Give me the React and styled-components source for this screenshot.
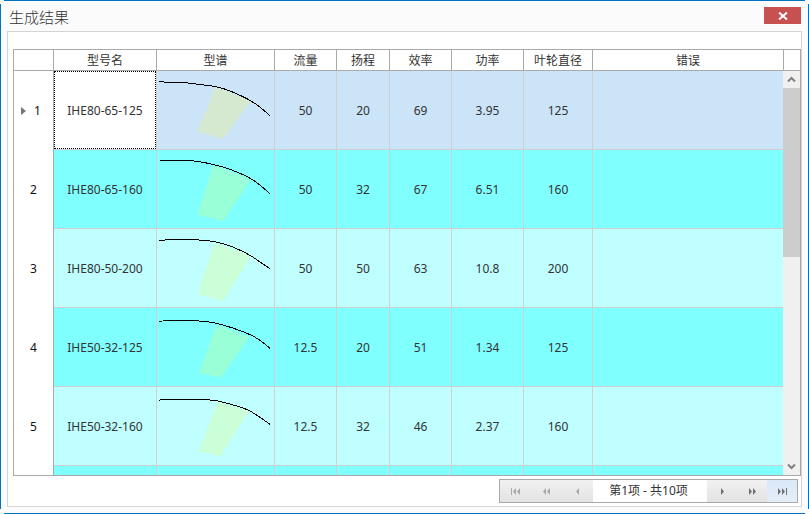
import React from 'react'
import styled, { createGlobalStyle } from 'styled-components'

const GlobalStyle = createGlobalStyle`
  html, body {
    margin: 0;
    padding: 0;
    background: #fff;
  }
  body {
    font-family: "Noto Sans", "Noto Sans CJK SC", sans-serif;
    font-size: 12px;
    color: #333;
  }
`

const COLS = '40px 103px 118px 62px 53px 62px 72px 69px'
const BLUE = 'linear-gradient(#0072c6, #0072c6)'

// the frame lines stop short of the corners, so they are drawn as backgrounds
const Window = styled.div`
  width: 809px;
  height: 514px;
  box-sizing: border-box;
  padding: 1px;
  background:
    ${BLUE} 4px 0 / 801px 1px no-repeat,
    ${BLUE} 4px 513px / 801px 1px no-repeat,
    ${BLUE} 0 4px / 1px 505px no-repeat,
    ${BLUE} 808px 4px / 1px 505px no-repeat,
    linear-gradient(#fbfbfb, #fbfbfb) 1px 1px / 807px 512px no-repeat;
  display: flex;
  flex-direction: column;
`
const TitleBar = styled.div`
  height: 30px;
  flex: none;
  display: flex;
  align-items: flex-start;
  justify-content: space-between;
  padding: 6px 7px 0 8px;
  box-sizing: border-box;
`
const Title = styled.div`
  font-family: "Noto Sans CJK SC", sans-serif;
  font-size: 15px;
  line-height: 20px;
  font-weight: 300;
  color: #333;
`
const CloseButton = styled.div`
  width: 37px;
  height: 17px;
  background: #c75050;
  display: flex;
  align-items: center;
  justify-content: center;
`
const Panel = styled.div`
  flex: 1;
  min-height: 0;
  margin: 0 6px 6px;
  border: 1px solid #d4d4d4;
  background: #fff;
  padding: 17px 0 0 5px;
  display: flex;
  flex-direction: column;
`
const Grid = styled.div`
  flex: 1;
  min-height: 0;
  border: 1px solid #a9a9a9;
  display: flex;
  flex-direction: column;
`
const HeaderRow = styled.div`
  height: 21px;
  flex: none;
  box-sizing: border-box;
  border-bottom: 1px solid #a9a9a9;
  display: grid;
  grid-template-columns: ${COLS} 191px 16px;
`
const HeaderCell = styled.div`
  box-sizing: border-box;
  border-right: ${p => (p.$last ? 'none' : '1px solid #a9a9a9')};
  font-family: "Noto Sans CJK SC", sans-serif;
  font-size: 12px;
  line-height: 20px;
  text-align: center;
  color: #333;
`
const GridBody = styled.div`
  flex: 1;
  min-height: 0;
  display: flex;
`
const Rows = styled.div`
  flex: 1;
  min-width: 0;
  overflow: hidden;
`
const Row = styled.div`
  height: 79px;
  display: grid;
  grid-template-columns: ${COLS} 190px;
  background: ${p => p.$bg};
`
const RowHead = styled.div`
  box-sizing: border-box;
  background: #fff;
  border-right: 1px solid #a9a9a9;
  display: flex;
  align-items: center;
  justify-content: center;
  position: relative;
  padding-left: ${p => (p.$current ? '8px' : '0')};
  color: #111;
`
const Marker = styled.span`
  position: absolute;
  left: 7px;
  top: 36px;
  width: 0;
  height: 0;
  border-left: 5px solid #777;
  border-top: 4px solid transparent;
  border-bottom: 4px solid transparent;
`
const Cell = styled.div`
  box-sizing: border-box;
  border-right: ${p => (p.$last ? 'none' : '1px solid #d0d0d0')};
  border-bottom: 1px solid #d0d0d0;
  display: flex;
  align-items: center;
  justify-content: center;
  min-width: 0;
`
const ActiveCell = styled.div`
  width: 100%;
  height: 100%;
  box-sizing: border-box;
  background: #fff;
  border: 1px dotted #000;
  display: flex;
  align-items: center;
  justify-content: center;
`
const Chart = styled.svg`
  display: block;
  width: 117px;
  height: 78px;
`
const ScrollBar = styled.div`
  width: 17px;
  flex: none;
  background: #f0f0f0;
  display: flex;
  flex-direction: column;
`
const ScrollButton = styled.div`
  height: 17px;
  flex: none;
  display: flex;
  align-items: center;
  justify-content: center;
`
const ScrollTrack = styled.div`
  flex: 1;
`
const ScrollThumb = styled.div`
  height: 169px;
  background: #cdcdcd;
`
const Footer = styled.div`
  flex: none;
  display: flex;
  justify-content: flex-end;
  padding: 3px;
`
const Pager = styled.div`
  border: 1px solid #a9a9a9;
  display: flex;
  height: 22px;
`
const PagerButton = styled.div`
  width: ${p => p.$w}px;
  display: flex;
  align-items: center;
  justify-content: center;
  background: ${p => (p.$hot
    ? 'linear-gradient(#dbe8f8, #e4eefa)'
    : 'linear-gradient(#f1f1f1, #e3e3e3)')};
`
const PagerLabel = styled.div`
  width: 114px;
  padding-right: 3px;
  box-sizing: border-box;
  background: #fff;
  text-align: center;
  font-size: 12px;
  line-height: 22px;
  color: #333;
`

const columns = ['型号名', '型谱', '流量', '扬程', '效率', '功率', '叶轮直径', '错误']

const data = [
  {
    no: 1, name: 'IHE80-65-125', q: '50', h: '20', eff: '69', p: '3.95', d: '125',
    curve: [[2, 10], [5, 11.3], [31, 11.7], [40, 13.3], [53, 14.7], [63, 16.3], [76, 21], [93, 29], [103, 36], [113, 44.7]],
    area: '58,15.7 94,29.7 65.7,68 39.7,60.3 49.7,39',
  },
  {
    no: 2, name: 'IHE80-65-160', q: '50', h: '32', eff: '67', p: '6.51', d: '160',
    curve: [[2, 10], [31, 10.3], [43, 11.7], [56, 14.3], [73, 19], [93, 27.7], [103, 35], [113, 43.7]],
    area: '56.3,15 94,29.3 66.3,71 40.3,64.7',
  },
  {
    no: 3, name: 'IHE80-50-200', q: '50', h: '50', eff: '63', p: '10.8', d: '200',
    curve: [[2, 11.7], [5, 10.7], [43, 10.7], [59.7, 12.7], [76, 17.7], [93, 26], [103, 33], [113, 39.7]],
    area: '58,13.7 94,27 66.3,72 40.3,65.3',
  },
  {
    no: 4, name: 'IHE50-32-125', q: '12.5', h: '20', eff: '51', p: '1.34', d: '125',
    curve: [[2, 13.7], [5, 12.3], [43, 12.7], [59.7, 15], [76, 20], [93, 26.3], [103, 32], [113, 40.3]],
    area: '59.7,17 92.3,28.7 64,69.7 41.7,64.7',
  },
  {
    no: 5, name: 'IHE50-32-160', q: '12.5', h: '32', eff: '46', p: '2.37', d: '160',
    curve: [[2, 13.3], [5, 12.3], [53.7, 12.3], [69.7, 16], [89.7, 22], [99.7, 28], [113, 37.3]],
    area: '60.7,14.7 92.3,24 63,69.7 53,66.3 41.7,64.7',
  },
  { no: 6 },
]

const rowColor = i => (i === 0 ? '#cce4f7' : i % 2 ? '#80ffff' : '#bfffff')

// rounds the measured points into a curve, through the midpoints of the segments
const smooth = pts => {
  let d = `M${pts[0][0]} ${pts[0][1]}`
  for (let i = 1; i < pts.length - 1; i++) {
    const mx = (pts[i][0] + pts[i + 1][0]) / 2
    const my = (pts[i][1] + pts[i + 1][1]) / 2
    d += ` Q${pts[i][0]} ${pts[i][1]} ${mx} ${my}`
  }
  const end = pts[pts.length - 1]
  return `${d} L${end[0]} ${end[1]}`
}

const PumpChart = ({ curve, area }) => (
  <Chart viewBox="0 0 117 78">
    {area && <polygon points={area} fill="rgba(255,255,40,0.19)" />}
    {curve && <path d={smooth(curve)} fill="none" stroke="#000" strokeWidth="1" shapeRendering="crispEdges" />}
  </Chart>
)

const Chevron = ({ down }) => (
  <svg width="9" height="7" viewBox="0 0 9 7">
    <path
      d={down ? 'M1 1.5 L4.5 5 L8 1.5' : 'M1 5.5 L4.5 2 L8 5.5'}
      fill="none"
      stroke="#808080"
      strokeWidth="2"
    />
  </svg>
)

const pagerShapes = {
  first: 'M0 0h1v7H0z M5 0v7L2 3.5z M9 0v7L6 3.5z',
  fastBack: 'M4 0v7L1 3.5z M8 0v7L5 3.5z',
  back: 'M6 0v7L3 3.5z',
  next: 'M3 0v7L6 3.5z',
  fastNext: 'M1 0v7L4 3.5z M5 0v7L8 3.5z',
  last: 'M0 0v7L3 3.5z M4 0v7L7 3.5z M8 0h1v7H8z',
}

const PagerIcon = ({ kind, off }) => (
  <svg width="9" height="7" viewBox="0 0 9 7">
    <path d={pagerShapes[kind]} fill={off ? '#a8a8a8' : '#707070'} />
  </svg>
)

export default function App() {
  return (
    <>
      <GlobalStyle />
      <Window>
        <TitleBar>
          <Title>生成结果</Title>
          <CloseButton>
            <svg width="10" height="8" viewBox="0 0 10 8">
              <path d="M1 0.5 L9 7.5 M9 0.5 L1 7.5" stroke="#fff" strokeWidth="2" />
            </svg>
          </CloseButton>
        </TitleBar>
        <Panel>
          <Grid>
            <HeaderRow>
              <HeaderCell />
              {columns.map(c => <HeaderCell key={c}>{c}</HeaderCell>)}
              <HeaderCell $last />
            </HeaderRow>
            <GridBody>
              <Rows>
                {data.map((r, i) => (
                  <Row key={r.no} $bg={rowColor(i)}>
                    <RowHead $current={i === 0}>
                      {i === 0 && <Marker />}
                      {r.name && r.no}
                    </RowHead>
                    <Cell>
                      {i === 0 ? <ActiveCell>{r.name}</ActiveCell> : r.name}
                    </Cell>
                    <Cell><PumpChart curve={r.curve} area={r.area} /></Cell>
                    <Cell>{r.q}</Cell>
                    <Cell>{r.h}</Cell>
                    <Cell>{r.eff}</Cell>
                    <Cell>{r.p}</Cell>
                    <Cell>{r.d}</Cell>
                    <Cell $last />
                  </Row>
                ))}
              </Rows>
              <ScrollBar>
                <ScrollButton><Chevron /></ScrollButton>
                <ScrollThumb />
                <ScrollTrack />
                <ScrollButton><Chevron down /></ScrollButton>
              </ScrollBar>
            </GridBody>
          </Grid>
          <Footer>
            <Pager>
              <PagerButton $w={31}><PagerIcon kind="first" off /></PagerButton>
              <PagerButton $w={31}><PagerIcon kind="fastBack" off /></PagerButton>
              <PagerButton $w={31}><PagerIcon kind="back" off /></PagerButton>
              <PagerLabel>第1项 - 共10项</PagerLabel>
              <PagerButton $w={30}><PagerIcon kind="next" /></PagerButton>
              <PagerButton $w={30}><PagerIcon kind="fastNext" /></PagerButton>
              <PagerButton $w={30} $hot><PagerIcon kind="last" /></PagerButton>
            </Pager>
          </Footer>
        </Panel>
      </Window>
    </>
  )
}
